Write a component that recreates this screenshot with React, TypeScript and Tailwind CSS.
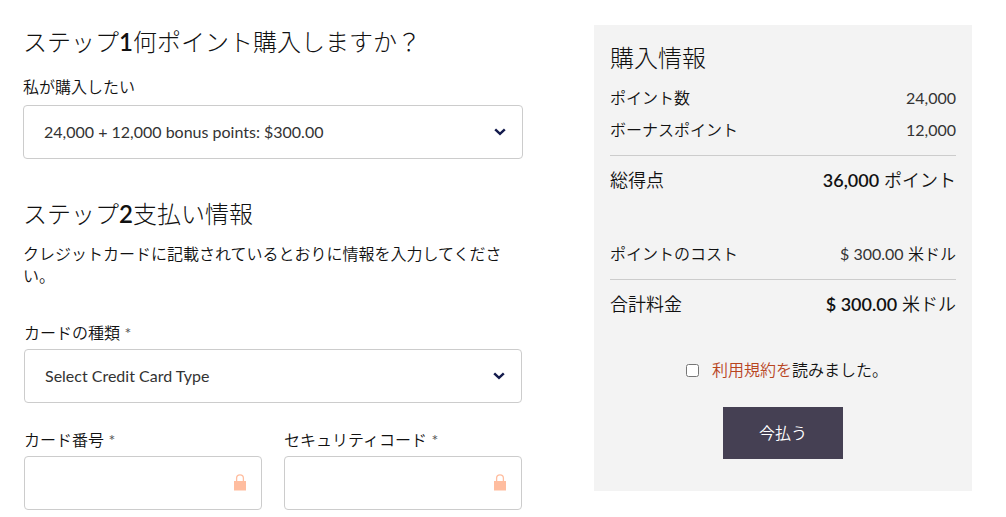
import { useState } from "react";
import type { ReactNode } from "react";

const FIELD =
  "block w-full h-[54px] rounded-[4px] border border-[#cccccc] bg-white text-base font-normal text-[#333333] outline-none focus:border-[#454053]";

const POINT_PACKAGES = [
  "24,000 + 12,000 bonus points: $300.00",
  "12,000 + 6,000 bonus points: $150.00",
];

const CARD_TYPES = ["Select Credit Card Type", "Visa", "MasterCard", "American Express"];

function SelectField({ id, options }: { id: string; options: string[] }) {
  return (
    <div className="relative">
      <select id={id} className={`${FIELD} appearance-none pl-5 pr-10 cursor-pointer`}>
        {options.map((o) => <option key={o}>{o}</option>)}
      </select>
      <svg
        className="absolute right-[17px] top-1/2 -translate-y-1/2 pointer-events-none"
        width="12"
        height="8"
        viewBox="0 0 12 8"
        fill="none"
        aria-hidden="true"
      >
        <path d="M1.2 1.4 6 5.8l4.8-4.4" stroke="#141b4d" strokeWidth="2.5" />
      </svg>
    </div>
  );
}

function SecureField({ id, label }: { id: string; label: string }) {
  return (
    <div className="min-w-0">
      <FieldLabel id={id}>{label}</FieldLabel>
      <div className="relative">
        <input id={id} type="text" autoComplete="off" className={`${FIELD} pl-5 pr-10`} />
        <svg
          className="absolute right-4 top-[18px] pointer-events-none"
          width="12"
          height="17"
          viewBox="0 0 12 17"
          fill="none"
          aria-hidden="true"
        >
          <path d="M2.6 8V4.2a3.4 3.4 0 0 1 6.8 0V8" stroke="#ffbd9f" strokeWidth="1.3" />
          <path d="M0 7h12v9.5H0z" fill="#ffbd9f" />
        </svg>
      </div>
    </div>
  );
}

function FieldLabel({ id, children }: { id: string; children: ReactNode }) {
  return (
    <label htmlFor={id} className="block mb-1 leading-6">
      {children} <span className="text-base font-normal text-[#555555] leading-none">*</span>
    </label>
  );
}

function Row({ label, amount, unit }: { label: string; amount: string; unit?: string }) {
  return (
    <div className="flex h-8 items-center justify-between">
      <dt>{label}</dt>
      <dd><span className="font-normal text-[#333333]">{amount}</span>{unit && ` ${unit}`}</dd>
    </div>
  );
}

function TotalRow({ label, amount, unit }: { label: string; amount: string; unit: string }) {
  return (
    <div className="mt-[9px] flex h-12 items-center justify-between border-t border-[#cccccc] text-lg">
      <dt>{label}</dt>
      <dd><span className="font-semibold">{amount}</span> {unit}</dd>
    </div>
  );
}

export default function App() {
  const [agreed, setAgreed] = useState(false);

  return (
    <main className="grid grid-cols-[500fr_378fr] items-start gap-[71px] pl-[23px] pr-[34px] pt-[25px] font-['Lato','Noto_Sans_CJK_JP',sans-serif] font-[350] text-base text-[#111111]">
      <form className="pt-px">
        <h2 className="mb-[17px] text-2xl leading-8 font-light">
          ステップ<span className="font-semibold">1</span>何ポイント購入しますか？
        </h2>
        <label htmlFor="points" className="block mb-[6px] leading-6">私が購入したい</label>
        <SelectField id="points" options={POINT_PACKAGES} />

        <h2 className="mt-[39px] mb-[13px] text-2xl leading-8 font-light">
          ステップ<span className="font-semibold">2</span>支払い情報
        </h2>
        <p className="leading-[22px]">
          クレジットカードに記載されているとおりに情報を入力してください。
        </p>

        <div className="mt-[34px] px-px">
          <FieldLabel id="card-type">カードの種類</FieldLabel>
          <SelectField id="card-type" options={CARD_TYPES} />
          <div className="mt-[25px] grid grid-cols-2 gap-[22px]">
            <SecureField id="card-number" label="カード番号" />
            <SecureField id="security-code" label="セキュリティコード" />
          </div>
        </div>
      </form>

      <aside className="bg-[#f3f3f3] px-4 pt-[17px] pb-8">
        <h2 className="mb-2 text-2xl leading-8 font-light">購入情報</h2>
        <dl>
          <Row label="ポイント数" amount="24,000" />
          <Row label="ボーナスポイント" amount="12,000" />
          <TotalRow label="総得点" amount="36,000" unit="ポイント" />
        </dl>
        <dl className="mt-[35px]">
          <Row label="ポイントのコスト" amount="$ 300.00" unit="米ドル" />
          <TotalRow label="合計料金" amount="$ 300.00" unit="米ドル" />
        </dl>

        <div className="mt-[31px] flex items-center justify-center gap-[13px] pl-2 leading-6">
          <input
            id="terms"
            type="checkbox"
            checked={agreed}
            onChange={(e) => setAgreed(e.target.checked)}
            className="size-[13px]"
          />
          <label htmlFor="terms">
            <a href="#terms" className="text-[#b8451f]">利用規約を</a>読みました。
          </label>
        </div>
        <button type="button" className="mx-auto mt-[25px] block h-[52px] w-[120px] bg-[#454053] text-white cursor-pointer">
          今払う
        </button>
      </aside>
    </main>
  );
}
